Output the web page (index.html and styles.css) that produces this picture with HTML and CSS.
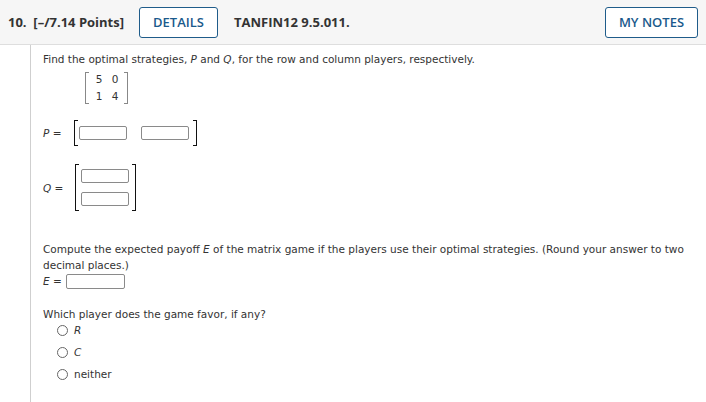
FILE: index.html
```html
<!DOCTYPE html>
<html>
<head>
<meta charset="utf-8">
<link rel="stylesheet" href="styles.css">
</head>
<body>
<header class="qhead">
  <span class="qnum">10.&nbsp; [–/7.14 Points]</span>
  <span class="btn">DETAILS</span>
  <span class="qcode">TANFIN12 9.5.011.</span>
  <span class="btn notes">MY NOTES</span>
</header>
<main class="qbody">
  <p class="line first">Find the optimal strategies, <i>P</i> and <i>Q</i>, for the row and column players, respectively.</p>
  <div class="given">
    <div class="mat gray">
      <div class="grid2">
        <span>5</span><span>0</span>
        <span>1</span><span>4</span>
      </div>
    </div>
  </div>
  <div class="eqrow prow">
    <span class="lbl"><i>P</i> =</span>
    <div class="mat dark rowmat">
      <span class="box"></span>
      <span class="box"></span>
    </div>
  </div>
  <div class="eqrow qrow">
    <span class="lbl"><i>Q</i> =</span>
    <div class="mat dark colmat">
      <span class="box"></span>
      <span class="box"></span>
    </div>
  </div>
  <p class="line compute">Compute the expected payoff <i>E</i> of the matrix game if the players use their optimal strategies. (Round your answer to two decimal places.)</p>
  <div class="erow"><span><i>E</i> =</span><span class="box ebox"></span></div>
  <p class="line which">Which player does the game favor, if any?</p>
  <ul class="opts">
    <li><span class="radio"></span><i>R</i></li>
    <li><span class="radio"></span><i>C</i></li>
    <li><span class="radio"></span>neither</li>
  </ul>
</main>
</body>
</html>
```
FILE: styles.css
```css
html, body {
  margin: 0;
  padding: 0;
  background: #fff;
}
body {
  width: 706px;
  height: 402px;
  overflow: hidden;
}
.qhead {
  display: flex;
  align-items: center;
  height: 45px;
  box-sizing: border-box;
  padding: 0 8px;
  background: #f6f6f6;
  border-bottom: 1px solid #dedede;
  font-family: "Open Sans", sans-serif;
  font-weight: 700;
  font-size: 13px;
  color: #333;
}
.qnum { margin-right: 15px; }
.qcode { margin-left: 16px; }
.btn {
  display: inline-flex;
  align-items: center;
  justify-content: center;
  box-sizing: border-box;
  height: 31px;
  width: 79px;
  border: 1px solid #1f5c8a;
  border-radius: 3px;
  background: #fff;
  color: #1b5a8c;
  font-weight: 600;
}
.btn.notes {
  margin-left: auto;
  width: 93px;
}
.qbody {
  margin-left: 30px;
  border-left: 1px solid #cfcfcf;
  padding: 6px 12px 0;
  font-family: "DejaVu Sans", sans-serif;
  font-size: 10.5px;
  color: #333;
  height: 360px;
}
.line {
  margin: 0;
  line-height: 16px;
}
.mat {
  position: relative;
  display: inline-flex;
}
.mat::before, .mat::after {
  content: "";
  position: absolute;
  top: 0;
  bottom: 0;
  width: 3px;
  border-top: 1px solid;
  border-bottom: 1px solid;
}
.mat::before { left: 0; border-left: 1px solid; }
.mat::after { right: 0; border-right: 1px solid; }
.mat.gray::before, .mat.gray::after { border-color: #888; }
.mat.dark::before, .mat.dark::after { border-color: #111; }
.given {
  margin: 5px 0 0 42px;
}
.grid2 {
  display: grid;
  grid-template-columns: 10px 10px;
  column-gap: 6px;
  row-gap: 4px;
  padding: 1px 8px 1px 9px;
  line-height: 13px;
  text-align: center;
  color: #333;
}
.eqrow {
  display: flex;
  align-items: center;
}
.lbl {
  width: 31px;
  color: #333;
}
.prow { margin-top: 16px; }
.rowmat {
  height: 26px;
  align-items: center;
  gap: 14px;
  padding: 0 8px 0 5px;
}
.box {
  display: inline-block;
  box-sizing: border-box;
  width: 48px;
  height: 14px;
  border: 1px solid #8a8a8a;
  border-radius: 2px;
  background: #fff;
}
.qrow { margin-top: 18px; }
.colmat {
  flex-direction: column;
  gap: 9px;
  padding: 5px 7px 5px 6px;
  margin-left: 1px;
}
.compute { margin-top: 30px; }
.erow {
  display: flex;
  align-items: center;
  gap: 4px;
  line-height: 16px;
}
.ebox { width: 59px; height: 15px; }
.which { margin-top: 17px; }
.opts {
  list-style: none;
  margin: -3px 0 0;
  padding: 0 0 0 14px;
}
.opts li {
  display: flex;
  align-items: center;
  height: 22px;
  gap: 6px;
}
.radio {
  box-sizing: border-box;
  width: 11px;
  height: 11px;
  border: 1px solid #666;
  border-radius: 50%;
}
```
